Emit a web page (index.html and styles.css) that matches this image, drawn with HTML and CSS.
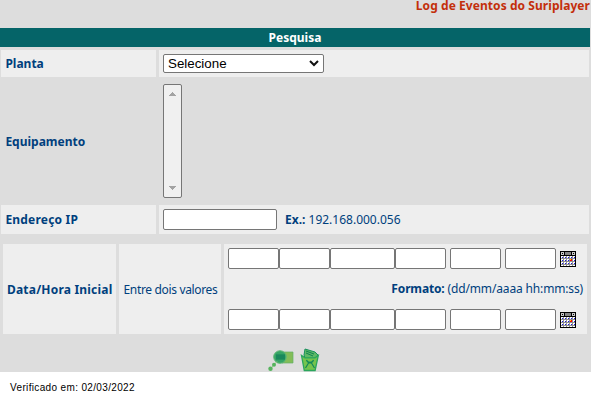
FILE: index.html
```html
<!DOCTYPE html>
<html lang="pt-BR">
<head>
<meta charset="utf-8">
<title>Log de Eventos do Suriplayer</title>
<link rel="stylesheet" href="styles.css">
</head>
<body>
<svg class="defs" aria-hidden="true">
  <defs>
    <pattern id="days" x="1" y="5" width="3" height="3" patternUnits="userSpaceOnUse">
      <rect width="3" height="3" fill="#fff"/>
      <path d="M2 0h1v3H0V2h2z" fill="#909090"/>
      <path d="M1 1h1v1H1z" fill="#1a1ae0"/>
    </pattern>
    <symbol id="calendar" viewBox="0 0 16 16">
      <path d="M0 0h16v16H0z" fill="#000"/>
      <path d="M1 1h3v3H1zM12 1h3v3h-3z" fill="#c8c8c8"/>
      <path d="M2 2h1v1H2zM13 2h1v1h-1z" fill="#000"/>
      <path d="M5 1h6v3H5z" fill="#858585"/>
      <path d="M1 5h14v10H1z" fill="url(#days)"/>
      <path d="M10 8h2v2h-2z" fill="#f00"/>
      <path d="M10 8h1v1h-1z" fill="#ffe600"/>
    </symbol>
  </defs>
</svg>
<main class="panel">
  <h1 class="title">Log de Eventos do Suriplayer</h1>
  <h2 class="bar">Pesquisa</h2>
  <form class="fields">
    <div class="row shaded">
      <label class="label">Planta</label>
      <div class="value"><div class="select"><span>Selecione</span>
        <svg width="10" height="7" viewBox="0 0 10 7"><path d="M1 1l4 4 4-4" fill="none" stroke="#111" stroke-width="2"/></svg></div></div>
    </div>
    <div class="row tall">
      <label class="label">Equipamento</label>
      <div class="value"><div class="listbox">
        <svg width="7" height="4" viewBox="0 0 7 4"><path d="M3 0h1v1h1v1h1v1h1v1H0V3h1V2h1V1h1z" fill="#a3a3a3"/></svg>
        <svg width="7" height="4" viewBox="0 0 7 4"><path d="M0 0h7v1H6v1H5v1H4v1H3V3H2V2H1V1H0z" fill="#a3a3a3"/></svg>
      </div></div>
    </div>
    <div class="row shaded ip">
      <label class="label wide">Endereço IP</label>
      <div class="value"><input class="box" type="text"><span class="hint"><b>Ex.:</b> 192.168.000.056</span></div>
    </div>
    <div class="period">
      <div class="cell"><b class="wide">Data/Hora Inicial</b></div>
      <div class="cell"><span class="narrow">Entre dois valores</span></div>
      <div class="cell dates">
        <div class="line"><input type="text"><input type="text"><input class="year" type="text"><input type="text"><input class="time" type="text"><input class="time" type="text"><svg class="cal" width="16" height="16"><use href="#calendar"/></svg></div>
        <p class="format"><b>Formato:</b> (dd/mm/aaaa hh:mm:ss)</p>
        <div class="line"><input type="text"><input type="text"><input class="year" type="text"><input type="text"><input class="time" type="text"><input class="time" type="text"><svg class="cal" width="16" height="16"><use href="#calendar"/></svg></div>
      </div>
    </div>
    <div class="actions">
      <svg width="28" height="24" viewBox="0 0 28 24">
        <path d="M15 4h11v11H15z" fill="#83bd58" stroke="#62b069" stroke-width=".7"/>
        <circle cx="13" cy="9" r="6.300" fill="#35a565" stroke="#63b777"/>
        <path d="M9 6.500h9v5H9z" fill="#128159"/>
        <path d="M9 8h9M9 10h9" stroke="#2f9a66" stroke-width=".6"/>
        <path d="M10 13.500l-3 3-3 4" fill="none" stroke="#9ccc8c" stroke-width="1"/>
        <circle cx="7" cy="16.800" r="2" fill="#55b45d"/>
        <circle cx="3.500" cy="20.800" r="2.200" fill="#55b45d"/>
      </svg>
      <svg width="20" height="24" viewBox="0 0 20 24">
        <path d="M4 7l1-6 10 3 3 3-2 3H5z" fill="#5eb966" stroke="#18905c"/>
        <path d="M6 3l8 3M6 5l7 3" stroke="#108352" stroke-width="1"/>
        <path d="M1.500 7.500l2.800 15h10.800l3.200-15-3.300 2.300H5z" fill="#75c44d" stroke="#2ba65d" stroke-width="1.300"/>
        <path d="M6.500 12c1 3 6 3 7 0M6.500 12l2 3-3 5M13.500 12l-2 3 3 5M8.500 15h3" fill="none" stroke="#12885a" stroke-width="1.200"/>
      </svg>
    </div>
  </form>
</main>
<footer class="footer">Verificado em: 02/03/2022</footer>
</body>
</html>
```
FILE: styles.css
```css
* { box-sizing: border-box; }

body {
  margin: 0;
  height: 402px;
  overflow: hidden;
  background: #fff;
  color: #003f7d;
  font: 12px/16px "Noto Sans", sans-serif;
}

.defs { display: block; width: 0; height: 0; }

.panel { height: 372px; background: #ddd; }

.title, .bar { margin: 0; font-size: 12px; white-space: nowrap; }
.title { height: 28px; padding-right: 1px; line-height: 12px; letter-spacing: .06px; text-align: right; color: #c32f0b; }
.bar { width: 590px; height: 19px; line-height: 19px; text-align: center; color: #fff; background: #056468; }

.fields { padding: 3px 2px 0 1px; }

.row { display: grid; grid-template-columns: 155px 430px; gap: 3px; height: 27px; }
.label, .value { display: flex; align-items: center; padding: 0 4px; }
.label { padding-left: 4.4px; font-weight: bold; }
.shaded > *, .cell { background: #eee; }
.tall { height: 128px; }
.tall .label { padding-top: 2px; }
.ip { height: 29px; }
.wide { letter-spacing: .2px; }
.narrow { letter-spacing: -.34px; }

.select {
  display: flex;
  align-items: center;
  justify-content: space-between;
  width: 161px;
  height: 19px;
  padding: 0 4px;
  border: 1px solid #767676;
  border-radius: 2px;
  background: #fff;
  color: #000;
  font: 13.33px/16px "Liberation Sans", sans-serif;
}

.listbox {
  display: flex;
  flex-direction: column;
  align-items: center;
  justify-content: space-between;
  width: 19px;
  height: 114px;
  padding: 7px 0;
  border: 1px solid #767676;
  border-radius: 2px;
  background: #f0f0f0;
}

input {
  width: 51px;
  height: 21px;
  padding: 0;
  border: 1px solid #767676;
  border-radius: 2px;
  background: #fff;
}

.box { width: 114px; }
.hint { margin-left: 8px; }

.period { display: grid; grid-template-columns: 113px 102px 363px; gap: 3px; height: 90px; margin: 10px 0 0 2px; }
.cell { display: flex; align-items: center; padding: 1px 4px 0; white-space: nowrap; }
.cell .narrow { padding-left: .5px; }
.dates { flex-direction: column; align-items: stretch; justify-content: space-between; padding: 4px; }
.line { display: flex; align-items: center; }
.year { width: 65px; }
.time { margin-left: 4px; }
.cal { margin-left: 4px; }
.format { margin: 0; letter-spacing: -.15px; text-align: right; }

.actions { display: flex; justify-content: center; gap: 5px; padding: 14px 4px 0 0; }

.footer { padding: 8px 10px; color: #000; font: 10px/16px "Liberation Sans", sans-serif; letter-spacing: .35px; }
```
